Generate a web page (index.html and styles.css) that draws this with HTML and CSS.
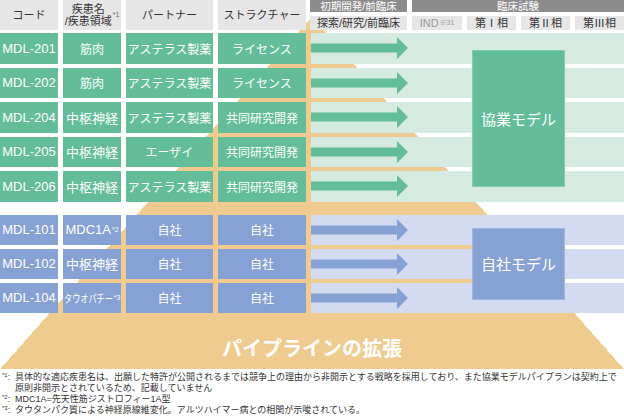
FILE: index.html
```html
<!DOCTYPE html>
<html lang="ja">
<head>
<meta charset="utf-8">
<link rel="stylesheet" href="styles.css">
</head>
<body>
<div class="chart">
  <div class="head">
    <div class="hcell">コード</div>
    <div class="hcell">疾患名<br>/疾患領域<sup>*1</sup></div>
    <div class="hcell">パートナー</div>
    <div class="hcell">ストラクチャー</div>
    <div class="phases">
      <div class="ph dark">初期開発/前臨床</div>
      <div class="ph dark span4">臨床試験</div>
      <div class="ph light">探索/研究/前臨床</div>
      <div class="ph light muted">IND<sup>※31</sup></div>
      <div class="ph light">第Ⅰ相</div>
      <div class="ph light">第Ⅱ相</div>
      <div class="ph light">第Ⅲ相</div>
    </div>
  </div>

  <div class="group green">
    <div class="cells">
      <div class="cell code">MDL-201</div><div class="cell">筋肉</div><div class="cell">アステラス製薬</div><div class="cell">ライセンス</div>
      <div class="cell code">MDL-202</div><div class="cell">筋肉</div><div class="cell">アステラス製薬</div><div class="cell">ライセンス</div>
      <div class="cell code">MDL-204</div><div class="cell big">中枢神経</div><div class="cell">アステラス製薬</div><div class="cell">共同研究開発</div>
      <div class="cell code">MDL-205</div><div class="cell big">中枢神経</div><div class="cell">エーザイ</div><div class="cell">共同研究開発</div>
      <div class="cell code">MDL-206</div><div class="cell big">中枢神経</div><div class="cell">アステラス製薬</div><div class="cell">共同研究開発</div>
    </div>
    <div class="lane">
      <div class="band"><svg class="arrow" viewBox="0 0 97 22"><path d="M0 6.5H86V0L97 11L86 22V15.5H0Z"/></svg></div>
      <div class="band"><svg class="arrow" viewBox="0 0 97 22"><path d="M0 6.5H86V0L97 11L86 22V15.5H0Z"/></svg></div>
      <div class="band"><svg class="arrow" viewBox="0 0 97 22"><path d="M0 6.5H86V0L97 11L86 22V15.5H0Z"/></svg></div>
      <div class="band"><svg class="arrow" viewBox="0 0 97 22"><path d="M0 6.5H86V0L97 11L86 22V15.5H0Z"/></svg></div>
      <div class="band"><svg class="arrow" viewBox="0 0 97 22"><path d="M0 6.5H86V0L97 11L86 22V15.5H0Z"/></svg></div>
      <div class="model">協業モデル</div>
    </div>
  </div>

  <div class="group blue">
    <div class="cells">
      <div class="cell code">MDL-101</div><div class="cell big">MDC1A<sup>*2</sup></div><div class="cell">自社</div><div class="cell">自社</div>
      <div class="cell code">MDL-102</div><div class="cell big">中枢神経</div><div class="cell">自社</div><div class="cell">自社</div>
      <div class="cell code">MDL-104</div><div class="cell"><span class="narrow">タウオパチー</span><sup>*3</sup></div><div class="cell">自社</div><div class="cell">自社</div>
    </div>
    <div class="lane">
      <div class="band"><svg class="arrow" viewBox="0 0 97 22"><path d="M0 6.5H86V0L97 11L86 22V15.5H0Z"/></svg></div>
      <div class="band"><svg class="arrow" viewBox="0 0 97 22"><path d="M0 6.5H86V0L97 11L86 22V15.5H0Z"/></svg></div>
      <div class="band"><svg class="arrow" viewBox="0 0 97 22"><path d="M0 6.5H86V0L97 11L86 22V15.5H0Z"/></svg></div>
      <div class="model">自社モデル</div>
    </div>
  </div>

  <div class="title">パイプラインの拡張</div>
</div>

<div class="notes">
  <p><span class="lab"><sup>*1</sup>:</span><span>具体的な適応疾患名は、出願した特許が公開されるまでは競争上の理由から非開示とする戦略を採用しており、また協業モデルパイプランは契約上で<br>原則非開示とされているため、記載していません</span></p>
  <p><span class="lab"><sup>*2</sup>:</span><span>MDC1A=先天性筋ジストロフィー1A型</span></p>
  <p><span class="lab"><sup>*3</sup>:</span><span>タウタンパク質による神経原線維変化。アルツハイマー病との相関が示唆されている。</span></p>
</div>
</body>
</html>
```

FILE: styles.css
```css
* {
  box-sizing: border-box;
  margin: 0;
  padding: 0;
}

body {
  margin: 0;
  width: 624px;
  background: #fff;
  color: #333;
  font-family: "Liberation Sans", "Noto Sans CJK JP", sans-serif;
}

.chart {
  height: 369px;
  background: conic-gradient(from 0deg at 312px 17px,
    transparent 138.45deg,
    #f0cb8f 138.45deg 221.55deg,
    transparent 221.55deg);
}

sup {
  font-size: 7px;
  line-height: 0;
  vertical-align: 4px;
  margin-left: 1px;
}

/* header */
.head {
  display: grid;
  grid-template-columns: 58px 58px 87px 88px 314px;
  column-gap: 5px;
  height: 30px;
  margin-bottom: 3px;
}

.hcell {
  background: #e6e6e6;
  display: flex;
  align-items: center;
  justify-content: center;
  text-align: center;
  font-size: 11px;
  line-height: 12px;
  white-space: nowrap;
}

.hcell sup {
  color: #666;
}

.phases {
  display: grid;
  grid-template-columns: 97px 50px 49px 49px 49px;
  grid-template-rows: 12px 14px;
  column-gap: 5px;
  row-gap: 4px;
  margin-left: -1px;
}

.ph {
  display: flex;
  align-items: center;
  justify-content: center;
  white-space: nowrap;
}

.ph.dark {
  background: #8c8c8c;
  color: #fff;
  font-size: 10.5px;
  line-height: 12px;
}

.span4 {
  grid-column: 2 / -1;
}

.ph.light {
  background: #e6e6e6;
  font-size: 11px;
  line-height: 14px;
}

.ph.muted {
  color: #9a9a9a;
}

/* groups */
.group {
  display: flex;
  column-gap: 5px;
}

.group.blue {
  margin-top: 13px;
}

.cells {
  display: grid;
  grid-template-columns: 58px 58px 87px 88px;
  column-gap: 5px;
  row-gap: 4px;
  grid-auto-rows: 30.5px;
}

.blue .cells {
  grid-auto-rows: 30px;
}

.cell {
  display: flex;
  align-items: center;
  justify-content: center;
  color: #fff;
  font-size: 12px;
  white-space: nowrap;
}

.cell.code {
  font-size: 13px;
}

.cell.big {
  font-size: 13px;
}

.green .cell {
  background: #62bd98;
}

.blue .cell {
  background: #86a1d3;
}

.narrow {
  display: inline-block;
  font-size: 11px;
  transform: scaleX(0.74);
  transform-origin: left center;
  margin-right: -17px;
}

.lane {
  position: relative;
  width: 313px;
  display: flex;
  flex-direction: column;
  row-gap: 4px;
}

.band {
  height: 30.5px;
  display: flex;
  align-items: center;
}

.blue .band {
  height: 30px;
}

.green .band {
  background: #d5ebe1;
}

.blue .band {
  background: #d2dbef;
}

.arrow {
  display: block;
  width: 97px;
  height: 22px;
}

.green .arrow {
  fill: #62bd98;
}

.blue .arrow {
  fill: #86a1d3;
}

.model {
  position: absolute;
  left: 161px;
  width: 93px;
  display: flex;
  align-items: center;
  justify-content: center;
  color: #fff;
  font-size: 15px;
  font-family: "Noto Sans CJK JP", sans-serif;
}

.green .model {
  top: 17px;
  bottom: 15px;
  background: #62bd98;
  border: 1px solid #84ccad;
}

.blue .model {
  top: 13px;
  bottom: 13px;
  background: #86a1d3;
  border: 1px solid #a3b7de;
}

/* title */
.title {
  height: 56px;
  padding-top: 24px;
  text-align: center;
  color: #fff;
  font-family: "Noto Sans CJK JP", sans-serif;
  font-size: 20px;
  font-weight: bold;
  line-height: 22px;
}

/* notes */
.notes {
  padding: 3px 0 0 2px;
  font-size: 9px;
  line-height: 11px;
  color: #333;
}

.notes p {
  display: flex;
  white-space: nowrap;
}

.notes .lab {
  flex: none;
  width: 13px;
}

.notes sup {
  font-size: 6px;
  vertical-align: 3px;
  margin-left: 0;
}
```
